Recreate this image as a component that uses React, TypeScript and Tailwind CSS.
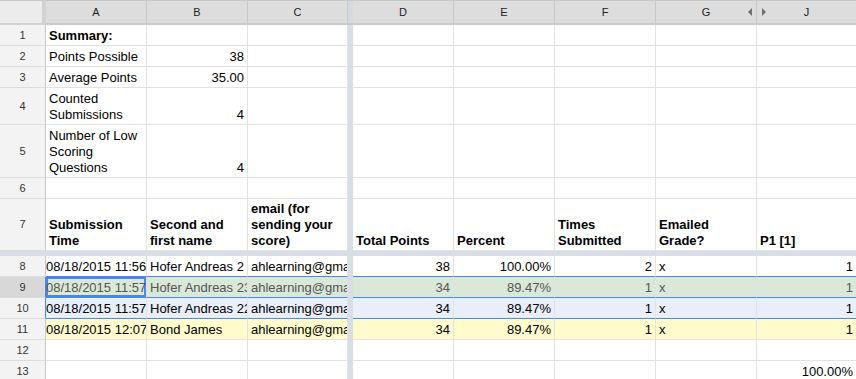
import React from "react";

type Cell = {
  t?: string;
  right?: boolean;
  bold?: boolean;
  clip?: boolean;
  pl?: string;
};

const widths = ["w-[101px]", "w-[101px]", "w-[100px]", "w-[101px]", "w-[101px]", "w-[101px]", "w-[101px]", "w-[100px]"];
const letters = ["A", "B", "C", "D", "E", "F", "G", "J"];

function HeaderRow() {
  return (
    <div className="flex h-[25px] border-t border-[#c8c8c8] bg-[#dddddd] text-[11px] text-[#222]">
      <div className="w-[46px] shrink-0 bg-[#ececec] border-r-4 border-b-2 border-[#d2d2d2]" />
      {letters.map((l, i) => (
        <React.Fragment key={l}>
          {i === 3 && <div className="w-[5px] shrink-0 bg-[#d6d9df] border-b-2 border-[#c9c9c9]" />}
          <div className={`${widths[i]} shrink-0 relative flex items-center justify-center border-r border-b-2 border-r-[#c9c9c9] border-b-[#c9c9c9]`}>
            {l}
            {l === "G" && (
              <div className="absolute right-[3px] top-0 h-full flex items-center">
                <svg width="5" height="8" viewBox="0 0 5 8">
                  <path d="M4 0 L0 4 L4 8 Z" fill="#6f6f6f" />
                </svg>
              </div>
            )}
            {l === "J" && (
              <div className="absolute left-[4px] top-0 h-full flex items-center">
                <svg width="5" height="8" viewBox="0 0 5 8">
                  <path d="M1 0 L5 4 L1 8 Z" fill="#6f6f6f" />
                </svg>
              </div>
            )}
          </div>
        </React.Fragment>
      ))}
    </div>
  );
}

function Row({
  n,
  h,
  cells,
  bg = "bg-white",
  text = "text-black",
  line = "border-b-[#e2e2e2]",
  numBg = "bg-[#f3f3f3]",
  numBorder = "border-r-[#c8c8c8]",
  selectA = false,
}: {
  n: number;
  h: string;
  cells: Cell[];
  bg?: string;
  text?: string;
  line?: string;
  numBg?: string;
  numBorder?: string;
  selectA?: boolean;
}) {
  return (
    <div className={`flex ${h}`}>
      <div className={`w-[46px] shrink-0 flex items-center justify-center text-[11px] text-[#333] border-r border-b border-b-[#dcdcdc] ${numBorder} ${numBg}`}>
        {n}
      </div>
      {widths.map((w, i) => {
        const c = cells[i] || {};
        return (
          <React.Fragment key={i}>
            {i === 3 && <div className="w-[5px] shrink-0 bg-[#d9dde6]" />}
            <div
              className={`${w} shrink-0 flex items-end border-r border-b border-r-[#e2e2e2] ${line} ${bg} ${text} ${
                c.right ? "justify-end" : "justify-start"
              } ${selectA && i === 0 ? "shadow-[inset_0_0_0_2px_#4a86e8]" : ""} overflow-hidden`}
            >
              <div
                className={`${c.pl ?? "pl-[3px]"} pb-[1px] text-[13px] leading-[16px] ${c.bold ? "font-bold" : ""} ${
                  c.clip ? "w-full whitespace-nowrap overflow-hidden pr-0" : "pr-[3px]"
                }`}
              >
                {c.t}
              </div>
            </div>
          </React.Fragment>
        );
      })}
    </div>
  );
}

const dataRow = (date: string, name: string, pts: string, pct: string, times: string): Cell[] => [
  { t: date, clip: true, pl: "pl-0" },
  { t: name, clip: true },
  { t: "ahlearning@gmail.com", clip: true },
  { t: pts, right: true },
  { t: pct, right: true },
  { t: times, right: true },
  { t: "x" },
  { t: "1", right: true },
];

export default function App() {
  return (
    <div className="w-[856px] h-[379px] overflow-hidden bg-white font-['Liberation_Sans',Arial,sans-serif]">
      <HeaderRow />
      <Row n={1} h="h-[21px]" cells={[{ t: "Summary:", bold: true }]} />
      <Row n={2} h="h-[21px]" cells={[{ t: "Points Possible" }, { t: "38", right: true }]} />
      <Row n={3} h="h-[21px]" cells={[{ t: "Average Points" }, { t: "35.00", right: true }]} />
      <Row n={4} h="h-[37px]" cells={[{ t: "Counted Submissions" }, { t: "4", right: true }]} />
      <Row n={5} h="h-[53px]" cells={[{ t: "Number of Low Scoring Questions" }, { t: "4", right: true }]} />
      <Row n={6} h="h-[21px]" cells={[]} />
      <Row
        n={7}
        h="h-[52px]"
        cells={[
          { t: "Submission Time", bold: true },
          { t: "Second and first name", bold: true },
          { t: "email (for sending your score)", bold: true },
          { t: "Total Points", bold: true },
          { t: "Percent", bold: true },
          { t: "Times Submitted", bold: true },
          { t: "Emailed Grade?", bold: true },
          { t: "P1 [1]", bold: true },
        ]}
      />
      <div className="h-[5px] bg-[#d9dde6]" />
      <Row n={8} h="h-[21px]" line="border-b-[#4a86e8]" cells={dataRow("08/18/2015 11:56:21", "Hofer Andreas 2", "38", "100.00%", "2")} />
      <Row
        n={9}
        h="h-[21px]"
        bg="bg-[#d9e8d7]"
        text="text-[#555]"
        line="border-b-[#4a86e8]"
        numBg="bg-[#d8d8d8]"
        numBorder="border-r-[#4a86e8]"
        selectA
        cells={dataRow("08/18/2015 11:57:02", "Hofer Andreas 23", "34", "89.47%", "1")}
      />
      <Row
        n={10}
        h="h-[21px]"
        bg="bg-[#e8eefa]"
        line="border-b-[#4a86e8]"
        numBorder="border-r-[#4a86e8]"
        cells={dataRow("08/18/2015 11:57:40", "Hofer Andreas 22", "34", "89.47%", "1")}
      />
      <Row n={11} h="h-[21px]" bg="bg-[#fffbcc]" cells={dataRow("08/18/2015 12:07:13", "Bond James", "34", "89.47%", "1")} />
      <Row n={12} h="h-[21px]" cells={[]} />
      <Row n={13} h="h-[21px]" cells={[{}, {}, {}, {}, {}, {}, {}, { t: "100.00%", right: true }]} />
    </div>
  );
}
